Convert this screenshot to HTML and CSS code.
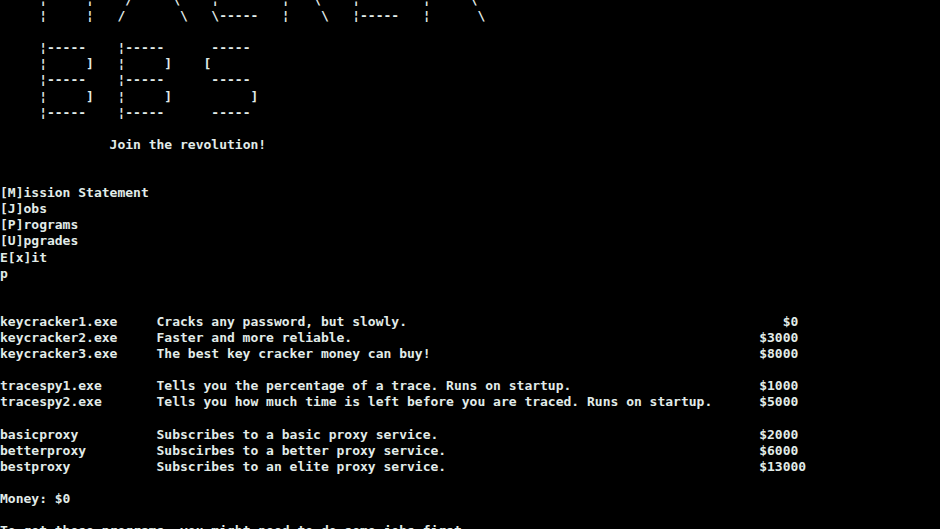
FILE: index.html
```html
<!DOCTYPE html>
<html lang="en">
<head>
<meta charset="utf-8">
<title>Hacker BBS</title>
<link rel="stylesheet" href="styles.css">
</head>
<body>
<main class="screen">
<pre class="banner">     ¦     ¦    /     \    ¦        ¦   \    ¦        ¦     \
     ¦     ¦   /       \   \-----   ¦    \   ¦-----   ¦      \

     ¦-----    ¦-----      -----
     ¦     ]   ¦     ]    [
     ¦-----    ¦-----      -----
     ¦     ]   ¦     ]          ]
     ¦-----    ¦-----      -----

              Join the revolution!</pre>
<ul class="menu">
  <li>[M]ission Statement</li>
  <li>[J]obs</li>
  <li>[P]rograms</li>
  <li>[U]pgrades</li>
  <li>E[x]it</li>
  <li>p</li>
</ul>
<section class="programs">
  <div class="group">
    <span>keycracker1.exe</span><span>Cracks any password, but slowly.</span><span class="price">$0</span>
    <span>keycracker2.exe</span><span>Faster and more reliable.</span><span class="price">$3000</span>
    <span>keycracker3.exe</span><span>The best key cracker money can buy!</span><span class="price">$8000</span>
  </div>
  <div class="group">
    <span>tracespy1.exe</span><span>Tells you the percentage of a trace. Runs on startup.</span><span class="price">$1000</span>
    <span>tracespy2.exe</span><span>Tells you how much time is left before you are traced. Runs on startup.</span><span class="price">$5000</span>
  </div>
  <div class="group">
    <span>basicproxy</span><span>Subscribes to a basic proxy service.</span><span class="price">$2000</span>
    <span>betterproxy</span><span>Subscirbes to a better proxy service.</span><span class="price">$6000</span>
    <span>bestproxy</span><span>Subscribes to an elite proxy service.</span><span class="price">$13000</span>
  </div>
</section>
<p class="money">Money: $0</p>
<p class="note">To get these programs, you might need to do some jobs first.</p>
</main>
</body>
</html>
```
FILE: styles.css
```css
html, body {
  margin: 0;
  padding: 0;
  background: #000;
  height: 100%;
  overflow: hidden;
}

body {
  color: #e2ece9;
  font: bold 13px/16.1px "DejaVu Sans Mono", "Liberation Mono", monospace;
}

.screen {
  margin-top: -8px;
}

.banner {
  margin: 0;
  font: inherit;
  white-space: pre;
}

.menu {
  margin: 32.2px 0 0;
  padding: 0;
  list-style: none;
}

.programs {
  margin-top: 32.2px;
  display: flex;
  flex-direction: column;
  gap: 16.1px;
}

.group {
  display: grid;
  grid-template-columns: 20ch 77ch 5ch;
  white-space: pre;
}

.price {
  text-align: right;
  white-space: nowrap;
}

.money,
.note {
  margin: 16.1px 0 0;
}
```
